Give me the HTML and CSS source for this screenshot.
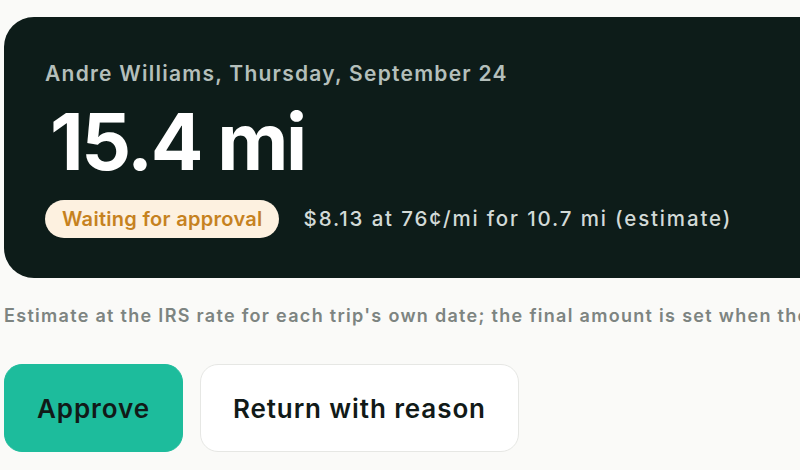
FILE: index.html
```html
<!DOCTYPE html>
<html lang="en">
<head>
<meta charset="utf-8">
<title>Trip approval</title>
<link rel="stylesheet" href="styles.css">
</head>
<body>
<main class="page">
  <section class="card">
    <p class="meta">Andre Williams, Thursday, September 24</p>
    <h1 class="distance">15.4 mi</h1>
    <div class="status-row">
      <span class="badge">Waiting for approval</span>
      <span class="amount">$8.13 at 76¢/mi for 10.7 mi (estimate)</span>
    </div>
  </section>
  <p class="note">Estimate at the IRS rate for each trip's own date; the final amount is set when the trip is approved and paid.</p>
  <div class="actions">
    <button class="btn btn-primary" type="button">Approve</button>
    <button class="btn btn-secondary" type="button">Return with reason</button>
  </div>
</main>
</body>
</html>
```
FILE: styles.css
```css
* { box-sizing: border-box; }
html, body {
  margin: 0;
  background: #fafaf8;
  overflow: hidden;
}
body {
  font-family: Inter, "Noto Sans", "Liberation Sans", sans-serif;
  width: 800px;
  height: 470px;
}
.page {
  padding: 17px 0 0 4px;
  width: 900px;
}
.card {
  background: #0d1c19;
  border-radius: 30px;
  padding: 45px 41px 40px;
  width: 880px;
}
.meta {
  margin: 0;
  font-size: 21px;
  line-height: 24px;
  font-weight: 600;
  letter-spacing: 1.25px;
  color: #b4bfbb;
}
.distance {
  margin: 17px 0 0 5px;
  font-size: 78px;
  line-height: 78px;
  font-weight: 700;
  letter-spacing: -0.03em;
  color: #ffffff;
}
.status-row {
  display: flex;
  align-items: center;
  gap: 25px;
  margin-top: 19px;
}
.badge {
  display: inline-block;
  background: #fdf1e0;
  color: #c6821f;
  font-size: 20px;
  line-height: 24px;
  font-weight: 600;
  letter-spacing: 0.3px;
  padding: 7px 16px 7px 17px;
  border-radius: 19px;
}
.amount {
  font-size: 20.5px;
  line-height: 24px;
  font-weight: 500;
  letter-spacing: 1.85px;
  color: #d2dad7;
}
.note {
  margin: 27px 0 0 0;
  font-size: 18px;
  line-height: 22px;
  font-weight: 600;
  letter-spacing: 1.3px;
  color: #7d8481;
  white-space: nowrap;
}
.actions {
  display: flex;
  gap: 17px;
  margin-top: 37px;
}
.btn {
  font-family: inherit;
  font-size: 26px;
  font-weight: 600;
  letter-spacing: 0.9px;
  height: 88px;
  padding: 0 32px;
  border-radius: 18px;
  color: #111a18;
  cursor: pointer;
}
.btn-primary {
  background: #1dbc9c;
  border: 1px solid #1dbc9c;
}
.btn-secondary {
  background: #ffffff;
  border: 1px solid #e6e7e4;
}
```
